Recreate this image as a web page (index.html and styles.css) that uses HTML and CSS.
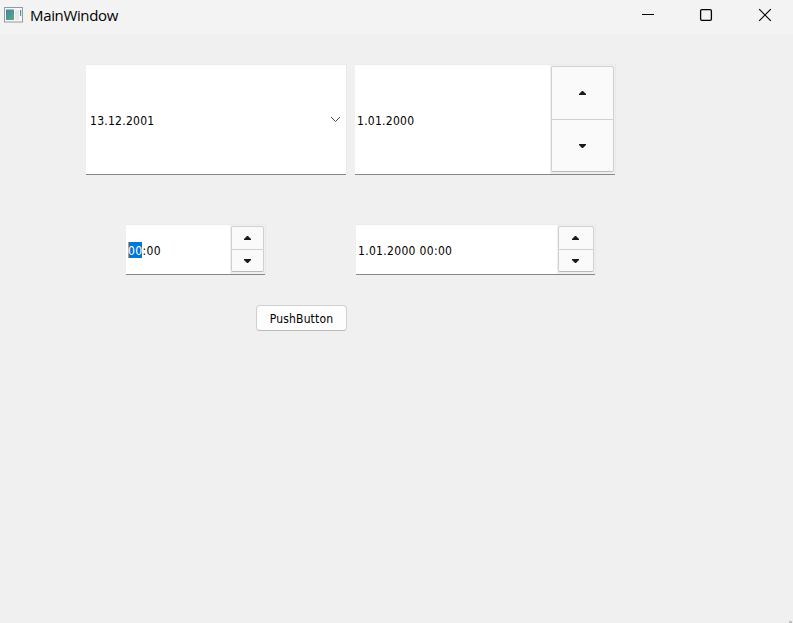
FILE: index.html
```html
<!DOCTYPE html>
<html lang="en">
<head>
<meta charset="utf-8">
<title>MainWindow</title>
<link rel="stylesheet" href="styles.css">
</head>
<body>
<div class="window">
  <header class="titlebar">
    <svg class="app-icon" width="19" height="16" viewBox="0 0 19 16">
      <defs><linearGradient id="g" x1="0" y1="0" x2="1" y2="1"><stop offset="0" stop-color="#467fa6"/><stop offset="1" stop-color="#55ad82"/></linearGradient></defs>
      <rect x=".5" y=".5" width="18" height="14.5" fill="#f5f7f8" stroke="#929ba2"/>
      <rect x="2" y="2.5" width="8" height="10.5" fill="url(#g)"/>
      <rect x="11" y="3" width="4" height="10" fill="#e8e8e8"/>
      <rect x="16" y="3" width="1.2" height="6" fill="url(#g)"/>
    </svg>
    <span class="title">MainWindow</span>
    <svg class="controls" width="130" height="14" viewBox="0 0 130 14" fill="none" stroke="#000">
      <path d="M0 6.5H12" stroke="#000"/>
      <rect x="58.6" y="1.6" width="10.8" height="10.8" rx="1.3" stroke-width="1.3"/>
      <path d="M117.2 1.2L128.8 12.8M128.8 1.2L117.2 12.8" stroke-width="1.2"/>
    </svg>
  </header>
  <main class="content">
    <div class="row row-dates">
      <div class="field combo">
        <span class="value">13.12.2001</span>
        <svg class="chevron" width="11" height="7" viewBox="0 0 11 7"><path d="M1 1L5.5 5.5L10 1" fill="none" stroke="#444"/></svg>
      </div>
      <div class="field date">
        <span class="value">1.01.2000</span>
        <div class="spinner">
          <div class="step"><svg width="7" height="4" viewBox="0 0 7 4"><path d="M0 4V3L3 0H4L7 3V4Z"/></svg></div>
          <div class="step"><svg width="7" height="4" viewBox="0 0 7 4"><path d="M0 0V1L3 4H4L7 1V0Z"/></svg></div>
        </div>
      </div>
    </div>
    <div class="row row-times">
      <div class="field time">
        <span class="value"><span class="selected">00</span>:00</span>
        <div class="spinner">
          <div class="step"><svg width="7" height="4" viewBox="0 0 7 4"><path d="M0 4V3L3 0H4L7 3V4Z"/></svg></div>
          <div class="step"><svg width="7" height="4" viewBox="0 0 7 4"><path d="M0 0V1L3 4H4L7 1V0Z"/></svg></div>
        </div>
      </div>
      <div class="field datetime">
        <span class="value">1.01.2000 00:00</span>
        <div class="spinner">
          <div class="step"><svg width="7" height="4" viewBox="0 0 7 4"><path d="M0 4V3L3 0H4L7 3V4Z"/></svg></div>
          <div class="step"><svg width="7" height="4" viewBox="0 0 7 4"><path d="M0 0V1L3 4H4L7 1V0Z"/></svg></div>
        </div>
      </div>
    </div>
    <button class="push">PushButton</button>
  </main>
  <div class="grip"></div>
</div>
</body>
</html>
```
FILE: styles.css
```css
* { box-sizing: border-box; }
body { margin: 0; overflow: hidden; }
svg { display: block; flex: none; }
.window {
  position: relative;
  width: 793px;
  height: 623px;
  background: #f0f0f0;
  color: #000;
  font: 12px/16px "DejaVu Sans Condensed", "DejaVu Sans", sans-serif;
  font-stretch: condensed;
}
.titlebar {
  display: flex;
  height: 34px;
  padding: 7px 21px 0 4px;
  background: #f3f3f3;
}
.title {
  flex: 1;
  margin: -1px 0 0 7px;
  font: 15px/18px "Open Sans", sans-serif;
  letter-spacing: -0.35px;
}
.controls { margin-top: 1px; }
.content { padding: 31px 0 0 86px; }
.row { display: flex; }
.row-dates { gap: 9px; height: 110px; }
.row-times { gap: 91px; height: 50px; margin: 50px 0 0 40px; }
.field {
  display: flex;
  align-items: center;
  padding-left: 2px;
  background: #fff;
  border-bottom: 1px solid #868686;
  box-shadow: 0 -1px 0 #ebebeb, 1px -1px 0 #e9e9e9;
}
.value {
  flex: 1;
  padding-top: 3px;
  letter-spacing: 0.26px;
  white-space: nowrap;
}
.combo { width: 260px; padding: 0 5px 0 4px; }
.date { width: 260px; }
.time { width: 139px; }
.time .value { padding-top: 2px; letter-spacing: 0.35px; }
.datetime { width: 239px; }
.datetime .value { letter-spacing: 0.32px; }
.spinner {
  display: flex;
  flex-direction: column;
  align-self: stretch;
  width: 65px;
  padding: 1px 1px 2px;
  background: #efefef;
}
.time .spinner { width: 35px; }
.datetime .spinner { width: 38px; }
.step {
  display: flex;
  flex: 1;
  align-items: center;
  justify-content: center;
  padding-top: 1px;
  background: #fafafa;
  border: 1px solid #d0d0d0;
  border-radius: 2px 2px 0 0;
  fill: #1a1a1a;
}
.step + .step {
  border-top: 0;
  border-bottom-color: #bababa;
  border-radius: 0 0 2px 2px;
}
.datetime .step { padding-right: 1px; }
.selected {
  display: inline-block;
  height: 16px;
  line-height: 18px;
  background: #0078d7;
  color: #fff;
  box-shadow: inset 1px 0 #ff8728;
}
.push {
  display: block;
  width: 91px;
  height: 26px;
  margin: 30px 0 0 170px;
  padding: 2px 0 0;
  background: #fdfdfd;
  border: 1px solid #d0d0d0;
  border-bottom-color: #bababa;
  border-radius: 4px;
  color: #000;
  font: inherit;
  letter-spacing: 0.15px;
}
.grip {
  position: absolute;
  right: 1px;
  bottom: 0;
  width: 3px;
  height: 2px;
  background: #bfbfbf;
}
```
